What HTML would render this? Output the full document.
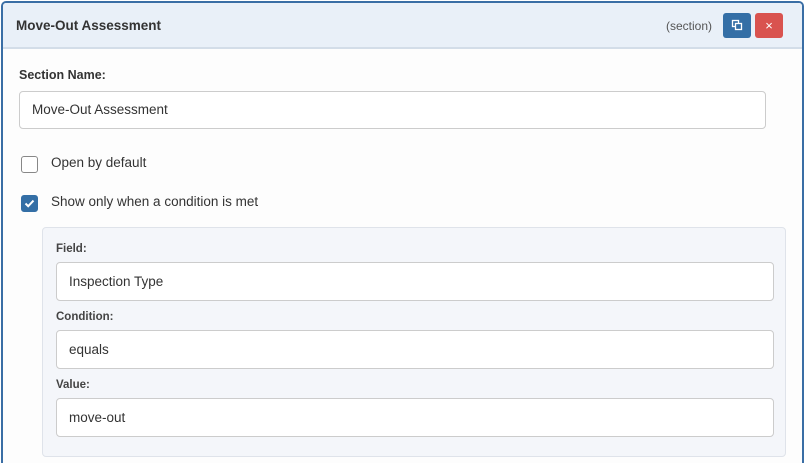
<!DOCTYPE html>
<html><head><meta charset="utf-8"><style>
*{box-sizing:border-box;margin:0;padding:0}
html,body{width:805px;height:463px;overflow:hidden}
body{position:relative;background:#fff;font-family:"Segoe UI","Liberation Sans",sans-serif;color:#333}
.card{position:absolute;left:1px;top:1px;width:803px;height:462px;border:2px solid #3a6ea5;border-bottom:none;border-radius:5px 5px 0 0;background:#fdfdfd;overflow:hidden}
.hdr{height:46px;background:#e9f0f8;border-bottom:2px solid #d3dde8;position:relative}
.hdr .t{position:absolute;left:13px;top:15px;font-size:13.5px;font-weight:700;color:#333}
.hdr .s{position:absolute;left:663px;top:16px;font-size:12px;color:#555}
.btn{position:absolute;top:10px;width:28px;height:25px;border-radius:3px}
.b1{left:720px;background:#346fa6}
.b2{left:752px;background:#d9534f;color:#fff;font-size:13px;text-align:center;line-height:25px}
.lbl{position:absolute;font-size:12.5px;font-weight:700;color:#333}
.in{position:absolute;background:#fff;border:1px solid #ccc;border-radius:4px;font-size:13.5px;color:#333;padding-left:12px}
.cb{position:absolute;left:18px;width:17px;height:17px;border:1px solid #888;border-radius:3px;background:#fff}
.cb.on{background:#346fa6;border-color:#346fa6}
.ct{position:absolute;left:48px;font-size:13.5px;color:#333}
.panel{position:absolute;left:42px;top:227px;width:744px;height:230px;background:#f4f6fa;border:1px solid #dfe3ea;border-radius:4px}
.pl{position:absolute;font-size:11.5px;font-weight:700;color:#444}
</style></head><body>
<div class="card">
 <div class="hdr">
  <div class="t">Move-Out Assessment</div>
  <div class="s">(section)</div>
  <div class="btn b1"><svg width="28" height="25" viewBox="0 0 28 25"><rect x="9.5" y="7.5" width="6" height="6" fill="none" stroke="#fff" stroke-width="1.3"/><rect x="12.5" y="10.5" width="6" height="6" fill="#346fa6" stroke="#fff" stroke-width="1.3"/></svg></div>
  <div class="btn b2">×</div>
 </div>
 <div class="lbl" style="left:16px;top:65px">Section Name:</div>
 <div class="in" style="left:16px;top:88px;width:747px;height:38px;line-height:36px">Move-Out Assessment</div>
 <div class="cb" style="top:153px"></div>
 <div class="ct" style="top:152px">Open by default</div>
 <div class="cb on" style="top:192px"><svg width="15" height="15" viewBox="0 0 15 15"><path d="M3.5 7.5l2.7 2.7 5.3-5.6" fill="none" stroke="#fff" stroke-width="2"/></svg></div>
 <div class="ct" style="top:191px">Show only when a condition is met</div>
</div>
<div class="panel">
 <div class="pl" style="left:13px;top:15px">Field:</div>
 <div class="in" style="left:13px;top:34px;width:718px;height:39px;line-height:37px">Inspection Type</div>
 <div class="pl" style="left:13px;top:83px">Condition:</div>
 <div class="in" style="left:13px;top:102px;width:718px;height:39px;line-height:37px">equals</div>
 <div class="pl" style="left:13px;top:151px">Value:</div>
 <div class="in" style="left:13px;top:170px;width:718px;height:39px;line-height:37px">move-out</div>
</div>
</body></html>
